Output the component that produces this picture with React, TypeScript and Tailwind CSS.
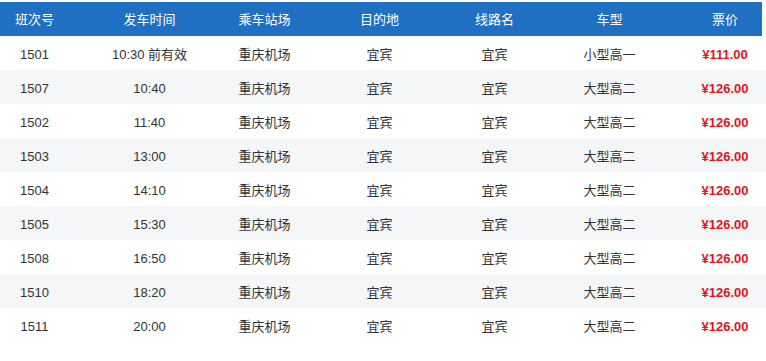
import React from "react";

const rows = [
  ["1501", "10:30 前有效", "重庆机场", "宜宾", "宜宾", "小型高一", "¥111.00"],
  ["1507", "10:40", "重庆机场", "宜宾", "宜宾", "大型高二", "¥126.00"],
  ["1502", "11:40", "重庆机场", "宜宾", "宜宾", "大型高二", "¥126.00"],
  ["1503", "13:00", "重庆机场", "宜宾", "宜宾", "大型高二", "¥126.00"],
  ["1504", "14:10", "重庆机场", "宜宾", "宜宾", "大型高二", "¥126.00"],
  ["1505", "15:30", "重庆机场", "宜宾", "宜宾", "大型高二", "¥126.00"],
  ["1508", "16:50", "重庆机场", "宜宾", "宜宾", "大型高二", "¥126.00"],
  ["1510", "18:20", "重庆机场", "宜宾", "宜宾", "大型高二", "¥126.00"],
  ["1511", "20:00", "重庆机场", "宜宾", "宜宾", "大型高二", "¥126.00"],
];

const heads = ["班次号", "发车时间", "乘车站场", "目的地", "线路名", "车型", "票价"];

const cols = "grid grid-cols-[92px_115px_115px_115px_115px_115px_96px] items-center";

const App = () => {
  return (
    <div
      className="w-[766px] h-[361px] bg-white pt-[2px]"
      style={{ fontFamily: '"Liberation Sans", Arial, "Noto Sans CJK SC", sans-serif' }}
    >
      <div className={`${cols} w-[762px] h-[34px] pt-[2px] bg-[#1f6fc2] text-white text-[13px]`}>
        {heads.map((h, i) => (
          <div
            key={h}
            className={`text-center ${i === 0 ? "pr-[23px]" : ""} ${i === 6 ? "pl-[20px]" : ""}`}
          >
            {h}
          </div>
        ))}
      </div>

      {rows.map((r, idx) => (
        <div
          key={r[0]}
          className={`${cols} w-full h-[34px] pt-[3px] text-[13px] text-[#333] ${idx % 2 === 1 ? "bg-[#f5f6f8]" : "bg-white"}`}
        >
          <div className="text-center pr-[23px]">{r[0]}</div>
          <div className="text-center">{r[1]}</div>
          <div className="text-center">{r[2]}</div>
          <div className="text-center">{r[3]}</div>
          <div className="text-center">{r[4]}</div>
          <div className="text-center">{r[5]}</div>
          <div className="text-center pl-[20px] font-bold text-[#e3131b]">{r[6]}</div>
        </div>
      ))}
    </div>
  );
};

export default App;
